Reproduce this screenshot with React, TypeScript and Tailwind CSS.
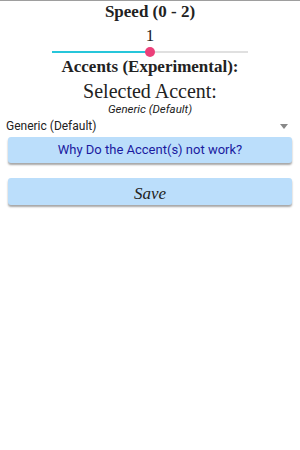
import React from "react";

const serif = { fontFamily: '"Liberation Serif", serif' };
const sans = { fontFamily: 'Roboto, sans-serif' };

export default function App() {
  return (
    <div className="w-[300px] h-[450px] bg-white border-t border-[#9e9e9e] flex flex-col items-center">
      <div className="mt-[1px] text-[17px] leading-[20px] font-bold text-[#222]" style={serif}>
        Speed (0 - 2)
      </div>
      <div className="mt-[5px] text-[17px] leading-[18px] text-[#222]" style={serif}>
        1
      </div>
      <div className="relative mt-[2px] w-[196px] h-[10px] flex items-center">
        <div className="w-[98px] h-[2px] bg-[#26c6da]" />
        <div className="flex-1 h-[2px] bg-[#e0e0e0]" />
        <div className="absolute left-[93px] top-[0px] w-[10px] h-[10px] rounded-full bg-[#ec407a]" />
      </div>
      <div className="mt-[0px] text-[17px] leading-[20px] font-bold text-[#222]" style={serif}>
        Accents (Experimental):
      </div>
      <div className="mt-[3px] text-[20px] leading-[22px] text-[#222]" style={serif}>
        Selected Accent:
      </div>
      <div className="text-[11.5px] leading-[14px] italic text-[#222]" style={sans}>
        Generic (Default)
      </div>
      <div className="w-full mt-[2px] pl-[6px] pr-[12px] h-[16px] flex items-center justify-between">
        <span className="text-[12px] text-[#222]" style={sans}>Generic (Default)</span>
        <svg width="8" height="5" viewBox="0 0 8 5"><path d="M0 0 L8 0 L4 5 Z" fill="#888" /></svg>
      </div>
      <div className="w-[284px] mt-[3px] h-[26px] rounded-[3px] bg-[#bbdefb] shadow-[0_2px_2px_rgba(0,0,0,0.35)] flex items-center justify-center">
        <span className="text-[13px] text-[#1a1aa0]" style={sans}>Why Do the Accent(s) not work?</span>
      </div>
      <div className="w-[284px] mt-[15px] h-[27px] rounded-[3px] bg-[#bbdefb] shadow-[0_2px_2px_rgba(0,0,0,0.35)] flex items-center justify-center">
        <span className="text-[17px] italic text-[#222] mt-[5px]" style={serif}>Save</span>
      </div>
    </div>
  );
}
